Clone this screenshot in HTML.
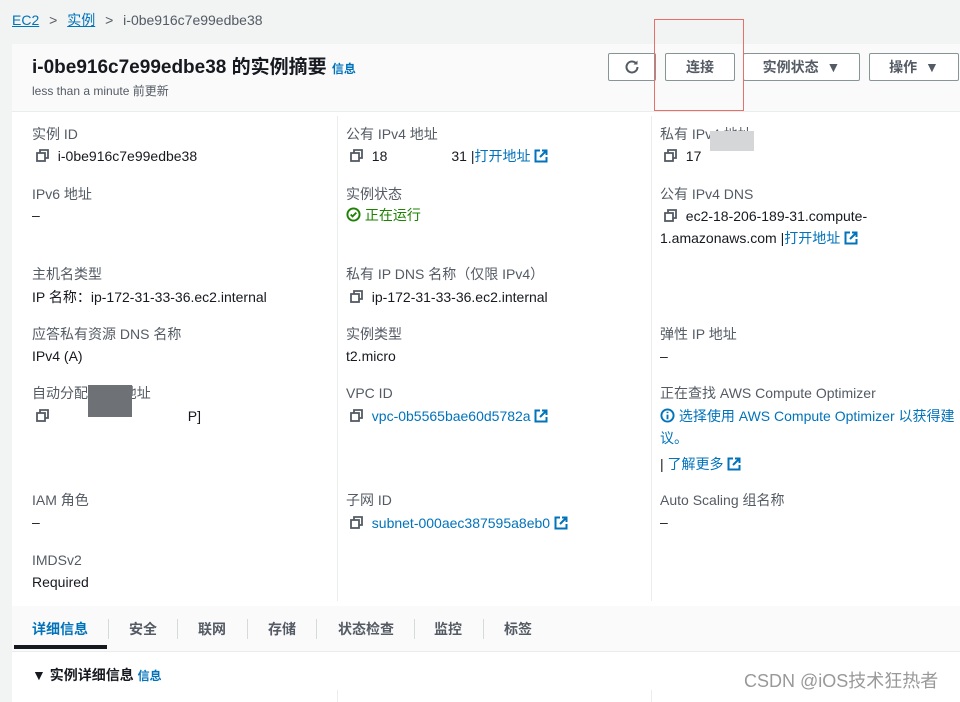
<!DOCTYPE html>
<html><head><meta charset="utf-8"><style>
*{margin:0;padding:0;box-sizing:border-box}
body{width:960px;height:702px;overflow:hidden;background:#f2f3f3;font-family:"Liberation Sans","Noto Sans CJK SC",sans-serif;font-size:14px;color:#16191f;position:relative}
.a{position:absolute;white-space:nowrap;line-height:18px}
.l{color:#545b64}
.k{color:#0073bb}
.btn{position:absolute;top:53px;height:28px;border:1px solid #879596;border-radius:2px;background:#fff;font-weight:bold;color:#545b64;display:flex;align-items:center;justify-content:center;font-size:14px}
svg{vertical-align:-2px}
</style></head><body>
<div class="a" style="left:12px;top:11px"><span class="k" style="text-decoration:underline">EC2</span> <span style="color:#545b64;margin:0 6px">&gt;</span> <span class="k" style="text-decoration:underline">实例</span> <span style="color:#545b64;margin:0 6px">&gt;</span> <span style="color:#545b64">i-0be916c7e99edbe38</span></div>
<div style="position:absolute;left:12px;top:44px;width:950px;height:68px;background:#fafafa;border-bottom:1px solid #eaeded"></div>
<div style="position:absolute;left:12px;top:112px;width:950px;height:494px;background:#fff"></div>
<div style="position:absolute;left:337px;top:116px;width:1px;height:485px;background:#eaeded"></div>
<div style="position:absolute;left:651px;top:116px;width:1px;height:485px;background:#eaeded"></div>
<div style="position:absolute;left:12px;top:606px;width:950px;height:46px;background:#fafafa;border-bottom:1px solid #eaeded"></div>
<div style="position:absolute;left:12px;top:652px;width:950px;height:50px;background:#fff"></div>
<div style="position:absolute;left:337px;top:690px;width:1px;height:12px;background:#eaeded"></div>
<div style="position:absolute;left:651px;top:690px;width:1px;height:12px;background:#eaeded"></div>

<div class="a" style="left:32px;top:57px;font-size:19px;font-weight:bold;line-height:22px">i-0be916c7e99edbe38 的实例摘要 <span class="k" style="font-size:12px;font-weight:bold">信息</span></div>
<div class="a l" style="left:32px;top:84px;font-size:12px;line-height:14px">less than a minute 前更新</div>

<div class="btn" style="left:608px;width:48px"><svg width="18" height="18" viewBox="0 0 18 18"><path d="M14.5 9a5.5 5.5 0 1 1-1.8-4.1" fill="none" stroke="#545b64" stroke-width="2"/><path d="M14.5 2.5v4h-4z" fill="#545b64"/></svg></div>
<div class="btn" style="left:665px;width:70px">连接</div>
<div class="btn" style="left:743px;width:117px">实例状态 &nbsp;▼</div>
<div class="btn" style="left:869px;width:90px">操作 &nbsp;▼</div>
<div style="position:absolute;left:654px;top:19px;width:90px;height:92px;border:1px solid #e8706a"></div>

<svg width="0" height="0" style="position:absolute"><defs>
<g id="cp"><rect x="1" y="4" width="8" height="8" fill="none" stroke="#545b64" stroke-width="1.8"/><path d="M4 4V1h8v8H9" fill="none" stroke="#545b64" stroke-width="1.8"/></g>
<g id="ex"><path d="M6 1.5H1.5v11h11V8" fill="none" stroke="#0073bb" stroke-width="2"/><path d="M8 1.5h4.5V6M12.5 1.5L6 8" fill="none" stroke="#0073bb" stroke-width="2"/></g>
</defs></svg>

<div class="a l" style="left:32px;top:125px">实例 ID</div>
<div class="a" style="left:36px;top:147px"><svg width="14" height="14"><use href="#cp"/></svg>&nbsp;&nbsp;i-0be916c7e99edbe38</div>
<div class="a l" style="left:32px;top:185px">IPv6 地址</div>
<div class="a" style="left:32px;top:206px">–</div>
<div class="a l" style="left:32px;top:265px">主机名类型</div>
<div class="a" style="left:32px;top:288px">IP 名称：ip-172-31-33-36.ec2.internal</div>
<div class="a l" style="left:32px;top:325px">应答私有资源 DNS 名称</div>
<div class="a" style="left:32px;top:347px">IPv4 (A)</div>
<div class="a l" style="left:32px;top:384px">自动分配的 IP 地址</div>
<div style="position:absolute;left:88px;top:385px;width:44px;height:32px;background:#6e7277"></div>
<div class="a" style="left:36px;top:407px"><svg width="14" height="14"><use href="#cp"/></svg>&nbsp; <span style="margin-left:130px">P]</span></div>
<div class="a l" style="left:32px;top:491px">IAM 角色</div>
<div class="a" style="left:32px;top:513px">–</div>
<div class="a l" style="left:32px;top:551px">IMDSv2</div>
<div class="a" style="left:32px;top:573px">Required</div>

<div class="a l" style="left:346px;top:125px">公有 IPv4 地址</div>
<div class="a" style="left:350px;top:147px"><svg width="14" height="14"><use href="#cp"/></svg>&nbsp; 18<span style="margin-left:64px">31</span> |<span class="k">打开地址</span> <svg width="14" height="14"><use href="#ex"/></svg></div>
<div class="a l" style="left:346px;top:185px">实例状态</div>
<div class="a" style="left:346px;top:206px;color:#1d8102"><svg width="15" height="15" viewBox="0 0 16 16"><circle cx="8" cy="8" r="6.5" fill="none" stroke="#1d8102" stroke-width="2"/><path d="M5 8l2 2 4-4" fill="none" stroke="#1d8102" stroke-width="2"/></svg> 正在运行</div>
<div class="a l" style="left:346px;top:265px">私有 IP DNS 名称（仅限 IPv4）</div>
<div class="a" style="left:350px;top:288px"><svg width="14" height="14"><use href="#cp"/></svg>&nbsp; ip-172-31-33-36.ec2.internal</div>
<div class="a l" style="left:346px;top:325px">实例类型</div>
<div class="a" style="left:346px;top:347px">t2.micro</div>
<div class="a l" style="left:346px;top:384px">VPC ID</div>
<div class="a" style="left:350px;top:407px"><svg width="14" height="14"><use href="#cp"/></svg>&nbsp; <span class="k">vpc-0b5565bae60d5782a</span> <svg width="14" height="14"><use href="#ex"/></svg></div>
<div class="a l" style="left:346px;top:491px">子网 ID</div>
<div class="a" style="left:350px;top:514px"><svg width="14" height="14"><use href="#cp"/></svg>&nbsp; <span class="k">subnet-000aec387595a8eb0</span> <svg width="14" height="14"><use href="#ex"/></svg></div>

<div class="a l" style="left:660px;top:125px">私有 IPv4 地址</div>
<div style="position:absolute;left:710px;top:131px;width:44px;height:20px;background:#d5d6d8"></div>
<div class="a" style="left:664px;top:147px"><svg width="14" height="14"><use href="#cp"/></svg>&nbsp; 17</div>
<div class="a l" style="left:660px;top:185px">公有 IPv4 DNS</div>
<div class="a" style="left:664px;top:207px"><svg width="14" height="14"><use href="#cp"/></svg>&nbsp; ec2-18-206-189-31.compute-</div>
<div class="a" style="left:660px;top:229px">1.amazonaws.com |<span class="k">打开地址</span> <svg width="14" height="14"><use href="#ex"/></svg></div>
<div class="a l" style="left:660px;top:325px">弹性 IP 地址</div>
<div class="a" style="left:660px;top:347px">–</div>
<div class="a l" style="left:660px;top:384px">正在查找 AWS Compute Optimizer</div>
<div class="a k" style="left:660px;top:407px"><svg width="15" height="15" viewBox="0 0 16 16"><circle cx="8" cy="8" r="6.5" fill="none" stroke="#0073bb" stroke-width="2"/><path d="M8 7v5M8 4v1.5" stroke="#0073bb" stroke-width="2"/></svg> 选择使用 AWS Compute Optimizer 以获得建</div>
<div class="a k" style="left:660px;top:429px">议。</div>
<div class="a" style="left:660px;top:455px">| <span class="k">了解更多</span> <svg width="14" height="14"><use href="#ex"/></svg></div>
<div class="a l" style="left:660px;top:491px">Auto Scaling 组名称</div>
<div class="a" style="left:660px;top:513px">–</div>

<div class="a" style="left:32px;top:620px;font-weight:bold;color:#0073bb">详细信息</div>
<div style="position:absolute;left:14px;top:645px;width:93px;height:4px;background:#16191f"></div>
<div class="a" style="left:129px;top:620px;font-weight:bold;color:#545b64">安全</div>
<div class="a" style="left:198px;top:620px;font-weight:bold;color:#545b64">联网</div>
<div class="a" style="left:268px;top:620px;font-weight:bold;color:#545b64">存储</div>
<div class="a" style="left:338px;top:620px;font-weight:bold;color:#545b64">状态检查</div>
<div class="a" style="left:434px;top:620px;font-weight:bold;color:#545b64">监控</div>
<div class="a" style="left:504px;top:620px;font-weight:bold;color:#545b64">标签</div>
<div style="position:absolute;left:108px;top:619px;width:1px;height:20px;background:#d5dbdb"></div>
<div style="position:absolute;left:177px;top:619px;width:1px;height:20px;background:#d5dbdb"></div>
<div style="position:absolute;left:247px;top:619px;width:1px;height:20px;background:#d5dbdb"></div>
<div style="position:absolute;left:316px;top:619px;width:1px;height:20px;background:#d5dbdb"></div>
<div style="position:absolute;left:414px;top:619px;width:1px;height:20px;background:#d5dbdb"></div>
<div style="position:absolute;left:483px;top:619px;width:1px;height:20px;background:#d5dbdb"></div>

<div class="a" style="left:32px;top:666px;font-weight:bold">▼ 实例详细信息 <span class="k" style="font-size:12px">信息</span></div>
<div class="a" style="left:744px;top:670px;font-size:18px;color:#999;line-height:22px">CSDN @iOS技术狂热者</div>
</body></html>
